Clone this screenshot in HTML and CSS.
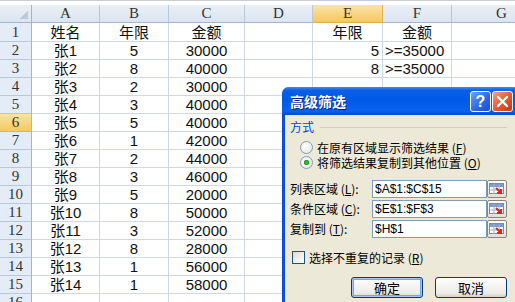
FILE: index.html
```html
<!DOCTYPE html>
<html lang="zh-CN">
<head>
    <meta charset="UTF-8">
    <title>高级筛选</title>
    <link rel="stylesheet" href="styles.css">
</head>
<body>
    <div class="app">
        <div class="topbar"></div>
        <div class="sheet" id="sheet"></div>

        <div class="dialog">
            <div class="titlebar">
                <span class="title">高级筛选</span>
                <span class="tb-btn help">?</span>
                <span class="tb-btn close">
                    <svg width="13" height="13" viewBox="0 0 13 13"><path d="M2 2 L11 11 M11 2 L2 11" stroke="#fff" stroke-width="2.4" stroke-linecap="round"/></svg>
                </span>
            </div>
            <div class="dlg-body">
                <div class="group-title"><span>方式</span><i class="rule"></i></div>
                <div class="radio-row"><span class="radio"></span>在原有区域显示筛选结果 (<u>F</u>)</div>
                <div class="radio-row"><span class="radio on"></span>将筛选结果复制到其他位置 (<u>O</u>)</div>

                <div class="fields">
                    <div class="field">
                        <span class="lbl">列表区域 (<u>L</u>):</span>
                        <span class="input">$A$1:$C$15</span>
                        <span class="ref"></span>
                    </div>
                    <div class="field">
                        <span class="lbl">条件区域 (<u>C</u>):</span>
                        <span class="input">$E$1:$F$3</span>
                        <span class="ref"></span>
                    </div>
                    <div class="field">
                        <span class="lbl">复制到 (<u>T</u>):</span>
                        <span class="input">$H$1</span>
                        <span class="ref"></span>
                    </div>
                </div>

                <div class="check-row"><span class="check"></span>选择不重复的记录 (<u>R</u>)</div>

                <div class="actions">
                    <button class="btn default">确定</button>
                    <button class="btn">取消</button>
                </div>
            </div>
        </div>
    </div>
    <script>
        document.addEventListener('DOMContentLoaded', () => {
    const sheet = document.getElementById('sheet');
    const letters = ['A', 'B', 'C', 'D', 'E', 'F', 'G'];

    // A, B, C, D, E, F, G
    const data = [
        ['姓名', '年限', '金额', '', '年限', '金额', ''],
        ['张1', '5', '30000', '', '5', '>=35000', ''],
        ['张2', '8', '40000', '', '8', '>=35000', ''],
        ['张3', '2', '30000'],
        ['张4', '3', '40000'],
        ['张5', '5', '40000'],
        ['张6', '1', '42000'],
        ['张7', '2', '44000'],
        ['张8', '3', '46000'],
        ['张9', '5', '20000'],
        ['张10', '8', '50000'],
        ['张11', '3', '52000'],
        ['张12', '8', '28000'],
        ['张13', '1', '56000'],
        ['张14', '1', '58000'],
        []
    ];

    const refIcon = '<svg width="16" height="12" viewBox="0 0 16 12">' +
        '<rect x="0.5" y="0.5" width="14" height="10" fill="#fff" stroke="#7a8aa8"/>' +
        '<rect x="1" y="1" width="13" height="3" fill="#7d9bd1"/>' +
        '<path d="M1 7h13M5 1v10M10 1v10" stroke="#9fb0cc" stroke-width="1"/>' +
        '<path d="M7 5 L12 10 M12 6 V10 H8" stroke="#d42a1e" stroke-width="2" fill="none"/>' +
        '</svg>';
    document.querySelectorAll('.ref').forEach(r => r.innerHTML = refIcon);

    function cell(cls, text) {
        const d = document.createElement('div');
        d.className = cls;
        d.textContent = text || '';
        sheet.appendChild(d);
    }

    cell('corner');
    letters.forEach(l => cell('col-hd' + (l === 'E' ? ' hot' : ''), l));

    data.forEach((row, i) => {
        const n = i + 1;
        cell('row-hd' + (n === 6 ? ' hot' : ''), n);
        letters.forEach((l, j) => {
            let align = 'center';
            if (l === 'E' && n > 1) align = 'right';
            if (l === 'F' && n > 1) align = 'left';
            cell('c ' + align, row[j]);
        });
    });
});
    </script>
</body>
</html>
```

FILE: styles.css
```css
* {
    margin: 0;
    padding: 0;
    box-sizing: border-box;
}

body {
    width: 515px;
    height: 302px;
    overflow: hidden;
    background: #fff;
    font-family: "Liberation Sans", "Noto Sans CJK SC", sans-serif;
}

.app {
    position: relative;
    width: 515px;
    height: 302px;
    overflow: hidden;
}

.topbar {
    height: 5px;
    border-top: 1px solid #c9ced6;
    background: #fff;
}

/* spreadsheet */
.sheet {
    display: grid;
    grid-template-columns: 32px 68px 69px 76px 68px 70px 69px 100px;
    grid-template-rows: 18px 19px;
    grid-auto-rows: 18px;
    font-size: 15px;
    color: #111;
}

.c {
    border-right: 1px solid #d0d7e5;
    border-bottom: 1px solid #d0d7e5;
    display: flex;
    align-items: center;
    white-space: nowrap;
    line-height: 1;
}

.c.center { justify-content: center; }
.c.right { justify-content: flex-end; padding-right: 3px; }
.c.left { justify-content: flex-start; padding-left: 2px; }

.corner,
.col-hd,
.row-hd {
    background: linear-gradient(#eaf0f8, #dbe4f0);
    border-right: 1px solid #9eb6ce;
    border-bottom: 1px solid #9eb6ce;
    color: #333;
    font-family: "Liberation Serif", serif;
    font-size: 15px;
    line-height: 1;
    display: flex;
    align-items: center;
    justify-content: center;
}

.col-hd {
    border-right-color: #b9c9da;
}

.row-hd {
    background: #e4ecf7;
    border-bottom-color: #b9c9da;
}

.corner {
    background:
        linear-gradient(135deg, transparent 50%, #bccadb 50%) right 3px bottom 3px / 9px 9px no-repeat,
        linear-gradient(#eaf0f8, #dbe4f0);
}

.hot {
    background: linear-gradient(#fbe3a8, #f6c85e);
    border-right-color: #e1b350;
    border-bottom-color: #e1b350;
}

/* dialog */
.dialog {
    position: absolute;
    left: 282px;
    top: 87px;
    width: 238px;
    height: 240px;
    background: #ece9d8;
    border: 3px solid #0a4ee0;
    border-top: none;
    border-radius: 7px 7px 0 0;
    font-size: 12px;
    line-height: 14px;
    color: #000;
    font-family: "Noto Sans CJK SC", "Liberation Sans", sans-serif;
}

.titlebar {
    height: 28px;
    margin: 0 -3px;
    border-radius: 7px 7px 0 0;
    background: linear-gradient(#3b8cf8 0%, #0a5fe6 12%, #0058e6 45%, #0a62f0 85%, #0347d6 100%);
    display: flex;
    align-items: center;
    padding: 0 7px 0 8px;
}

.title {
    color: #fff;
    font-weight: bold;
    font-size: 14px;
    text-shadow: 1px 1px 0 #0a1f80;
    flex: 1;
}

.tb-btn {
    width: 21px;
    height: 21px;
    border: 1px solid #fff;
    border-radius: 3px;
    display: flex;
    align-items: center;
    justify-content: center;
    margin-left: 1px;
    margin-top: 1px;
}

.help {
    background: linear-gradient(135deg, #6fa0f8, #2d64e6 60%, #1c4fd0);
    color: #fff;
    font-family: "Liberation Sans", sans-serif;
    font-weight: bold;
    font-size: 16px;
}

.close {
    background: linear-gradient(135deg, #f0a080, #e4572d 55%, #c93812);
}

.dlg-body {
    padding: 5px 10px 0 5px;
}

.group-title {
    display: flex;
    align-items: center;
    height: 14px;
    color: #0046d5;
    margin-bottom: 6px;
}

.group-title .rule {
    flex: 1;
    height: 1px;
    margin-left: 6px;
    background: #d0d0bf;
}

.radio-row,
.check-row {
    display: flex;
    align-items: center;
    height: 15px;
    line-height: 14px;
    white-space: nowrap;
    overflow: hidden;
}

.radio-row {
    padding-left: 10px;
}

.radio {
    flex: none;
    width: 13px;
    height: 13px;
    border-radius: 50%;
    border: 1px solid #7f9db9;
    background: radial-gradient(circle at 40% 35%, #fff, #e4e2da);
    margin-right: 4px;
}

.radio.on {
    background:
        radial-gradient(circle, #4dbb3c 0, #21a121 2.5px, transparent 3px),
        radial-gradient(circle at 40% 35%, #fff, #e4e2da);
}

.fields {
    margin-top: 10px;
    display: flex;
    flex-direction: column;
    gap: 2px;
}

.field {
    display: flex;
    align-items: center;
    height: 18px;
}

.lbl {
    width: 82px;
    white-space: nowrap;
}

.input {
    flex: 1;
    height: 18px;
    background: #fff;
    border: 1px solid #7f9db9;
    font-family: "Liberation Sans", sans-serif;
    font-size: 12px;
    line-height: 16px;
    padding-left: 2px;
}

.ref {
    width: 20px;
    height: 18px;
    border: 1px solid #8a8778;
    border-radius: 2px;
    background: linear-gradient(#fdfdfb, #e2dfd2);
    display: flex;
    align-items: center;
    justify-content: center;
}

.check-row {
    margin-top: 12px;
    padding-left: 2px;
}

.check {
    flex: none;
    width: 13px;
    height: 13px;
    border: 1px solid #1c5180;
    background: linear-gradient(135deg, #dcdcd3, #fff);
    margin-right: 4px;
}

.actions {
    margin-top: 12px;
    display: flex;
    justify-content: flex-end;
    gap: 12px;
}

.btn {
    width: 72px;
    height: 21px;
    border: 1px solid #003c74;
    border-radius: 3px;
    background: linear-gradient(#fff, #ecebe6 80%, #d6d0c5);
    font-family: "Noto Sans CJK SC", sans-serif;
    font-size: 13px;
    color: #000;
}

.btn.default {
    box-shadow: inset 0 0 0 1px #aac6f7, inset 0 0 0 2px #7ba2e7;
}
```
